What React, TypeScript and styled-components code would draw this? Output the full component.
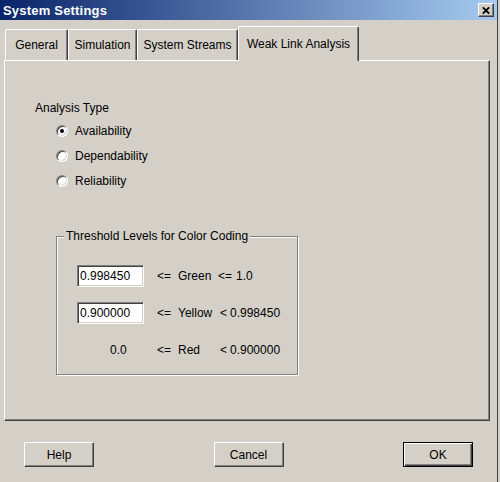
import React from 'react';
import styled, { createGlobalStyle } from 'styled-components';

const GlobalStyle = createGlobalStyle`
  html, body {
    margin: 0;
    padding: 0;
    background: #d4d0c8;
  }
  body {
    font-family: 'Liberation Sans', Arial, sans-serif;
    font-size: 12px;
    color: #000;
  }
`;

const Window = styled.div`
  width: 500px;
  height: 482px;
  box-sizing: border-box;
  display: flex;
  flex-direction: column;
  background: #d4d0c8;
  box-shadow: inset -2px 0 0 #d4d0c8, inset -3px 0 0 #404040;
`;

const TitleBar = styled.div`
  height: 20px;
  margin-right: 3px;
  padding: 0 3px 0 3px;
  display: flex;
  align-items: center;
  justify-content: space-between;
  background: linear-gradient(to right, #0a246a, #a6caf0);
`;

const Title = styled.span`
  color: #fff;
  font-weight: bold;
  font-size: 13px;
  letter-spacing: 0.2px;
`;

const CloseButton = styled.div`
  width: 16px;
  height: 14px;
  box-sizing: border-box;
  background: #d4d0c8;
  border: 1px solid;
  border-color: #fff #404040 #404040 #fff;
  box-shadow: inset -1px -1px 0 #808080;
  display: flex;
  align-items: center;
  justify-content: center;
`;

const Body = styled.div`
  flex: 1;
  display: flex;
  flex-direction: column;
  padding: 6px 0 0 4px;
`;

const TabStrip = styled.div`
  display: flex;
  align-items: flex-end;
  height: 34px;
  padding-left: 1px;
`;

const Tab = styled.div<{ $active?: boolean; $w: number }>`
  width: ${(p) => p.$w}px;
  height: ${(p) => (p.$active ? 35 : 31)}px;
  box-sizing: border-box;
  display: flex;
  align-items: center;
  justify-content: center;
  background: #d4d0c8;
  border-top: 1px solid #fff;
  border-left: 1px solid #fff;
  border-right: 1px solid #404040;
  box-shadow: inset -1px 0 0 #808080;
  border-radius: 2px 2px 0 0;
  position: ${(p) => (p.$active ? 'relative' : 'static')};
  z-index: ${(p) => (p.$active ? 1 : 0)};
  margin-bottom: ${(p) => (p.$active ? -1 : 0)}px;
`;

const Panel = styled.div`
  width: 486px;
  height: 361px;
  box-sizing: border-box;
  border: 1px solid;
  border-color: #fff #404040 #404040 #fff;
  box-shadow: inset -1px -1px 0 #808080;
  padding: 40px 0 0 30px;
`;

const SectionLabel = styled.div`
  line-height: 14px;
`;

const RadioList = styled.div`
  display: flex;
  flex-direction: column;
  margin: 3px 0 0 21px;
`;

const RadioRow = styled.div`
  height: 25px;
  display: flex;
  align-items: center;
  gap: 7px;
`;

const RadioCircle = styled.span`
  width: 12px;
  height: 12px;
  box-sizing: border-box;
  border-radius: 50%;
  background: #fff;
  border: 1px solid;
  border-color: #808080 #fff #fff #808080;
  box-shadow: inset 1px 1px 0 #404040, inset -1px -1px 0 #d4d0c8;
  display: flex;
  align-items: center;
  justify-content: center;
`;

const RadioDot = styled.span`
  width: 4px;
  height: 4px;
  border-radius: 50%;
  background: #000;
`;

const GroupBox = styled.fieldset`
  margin: 36px 0 0 21px;
  width: 242px;
  box-sizing: border-box;
  border: 1px solid #808080;
  box-shadow: 1px 1px 0 #fff, inset 1px 1px 0 #fff;
  padding: 22px 0 13px 0;
  min-inline-size: auto;
`;

const Legend = styled.legend`
  margin-left: 7px;
  padding: 0 2px;
  line-height: 14px;
  background: #d4d0c8;
`;

const ThresholdGrid = styled.div`
  display: grid;
  grid-template-columns: 80px 21px 40px auto;
  grid-auto-rows: 22px;
  row-gap: 15px;
  align-items: center;
  margin-left: 20px;
`;

const ValueInput = styled.input`
  width: 67px;
  height: 22px;
  box-sizing: border-box;
  margin: 0;
  padding: 0 0 0 2px;
  border: 1px solid;
  border-color: #808080 #fff #fff #808080;
  box-shadow: inset 1px 1px 0 #404040, inset -1px -1px 0 #d4d0c8;
  background: #fff;
  font-family: 'Liberation Sans', Arial, sans-serif;
  font-size: 12px;
  color: #000;
  outline: none;
`;

const FixedValue = styled.span`
  padding-left: 33px;
`;

const Bound = styled.span`
  display: flex;
  align-items: center;
`;

const Op = styled.span<{ $w: number; $pad?: number }>`
  width: ${(p) => p.$w}px;
  padding-left: ${(p) => p.$pad ?? 0}px;
`;

const ButtonRow = styled.div`
  display: flex;
  justify-content: space-between;
  margin-top: 21px;
  padding: 0 27px 0 20px;
`;

const Button = styled.button<{ $default?: boolean }>`
  width: 70px;
  height: 25px;
  box-sizing: border-box;
  margin: 0;
  padding: 0;
  background: #d4d0c8;
  font-family: 'Liberation Sans', Arial, sans-serif;
  font-size: 12px;
  color: #000;
  border: 1px solid;
  border-color: ${(p) => (p.$default ? '#000' : '#fff #404040 #404040 #fff')};
  box-shadow: ${(p) =>
    p.$default
      ? 'inset 1px 1px 0 #fff, inset -1px -1px 0 #404040, inset -2px -2px 0 #808080'
      : 'inset -1px -1px 0 #808080'};
`;

const tabs = [
  { label: 'General', w: 63 },
  { label: 'Simulation', w: 69 },
  { label: 'System Streams', w: 101 },
  { label: 'Weak Link Analysis', w: 121, active: true },
];

const analysisTypes = [
  { label: 'Availability', checked: true },
  { label: 'Dependability' },
  { label: 'Reliability' },
];

export default function App() {
  return (
    <>
      <GlobalStyle />
      <Window>
        <TitleBar>
          <Title>System Settings</Title>
          <CloseButton>
            <svg width="8" height="7" viewBox="0 0 8 7">
              <path d="M0.8 0.3L7.2 6.7M7.2 0.3L0.8 6.7" stroke="#000" strokeWidth="1.8" fill="none" />
            </svg>
          </CloseButton>
        </TitleBar>
        <Body>
          <TabStrip>
            {tabs.map((t) => (
              <Tab key={t.label} $w={t.w} $active={t.active}>
                {t.label}
              </Tab>
            ))}
          </TabStrip>
          <Panel>
            <SectionLabel>Analysis Type</SectionLabel>
            <RadioList>
              {analysisTypes.map((r) => (
                <RadioRow key={r.label}>
                  <RadioCircle>{r.checked && <RadioDot />}</RadioCircle>
                  {r.label}
                </RadioRow>
              ))}
            </RadioList>
            <GroupBox>
              <Legend>Threshold Levels for Color Coding</Legend>
              <ThresholdGrid>
                <ValueInput readOnly value="0.998450" />
                <span>&lt;=</span>
                <span>Green</span>
                <Bound>
                  <Op $w={18}>&lt;=</Op>
                  1.0
                </Bound>

                <ValueInput readOnly value="0.900000" />
                <span>&lt;=</span>
                <span>Yellow</span>
                <Bound>
                  <Op $w={10} $pad={2}>&lt;</Op>
                  0.998450
                </Bound>

                <FixedValue>0.0</FixedValue>
                <span>&lt;=</span>
                <span>Red</span>
                <Bound>
                  <Op $w={10} $pad={2}>&lt;</Op>
                  0.900000
                </Bound>
              </ThresholdGrid>
            </GroupBox>
          </Panel>
          <ButtonRow>
            <Button>Help</Button>
            <Button>Cancel</Button>
            <Button $default>OK</Button>
          </ButtonRow>
        </Body>
      </Window>
    </>
  );
}
